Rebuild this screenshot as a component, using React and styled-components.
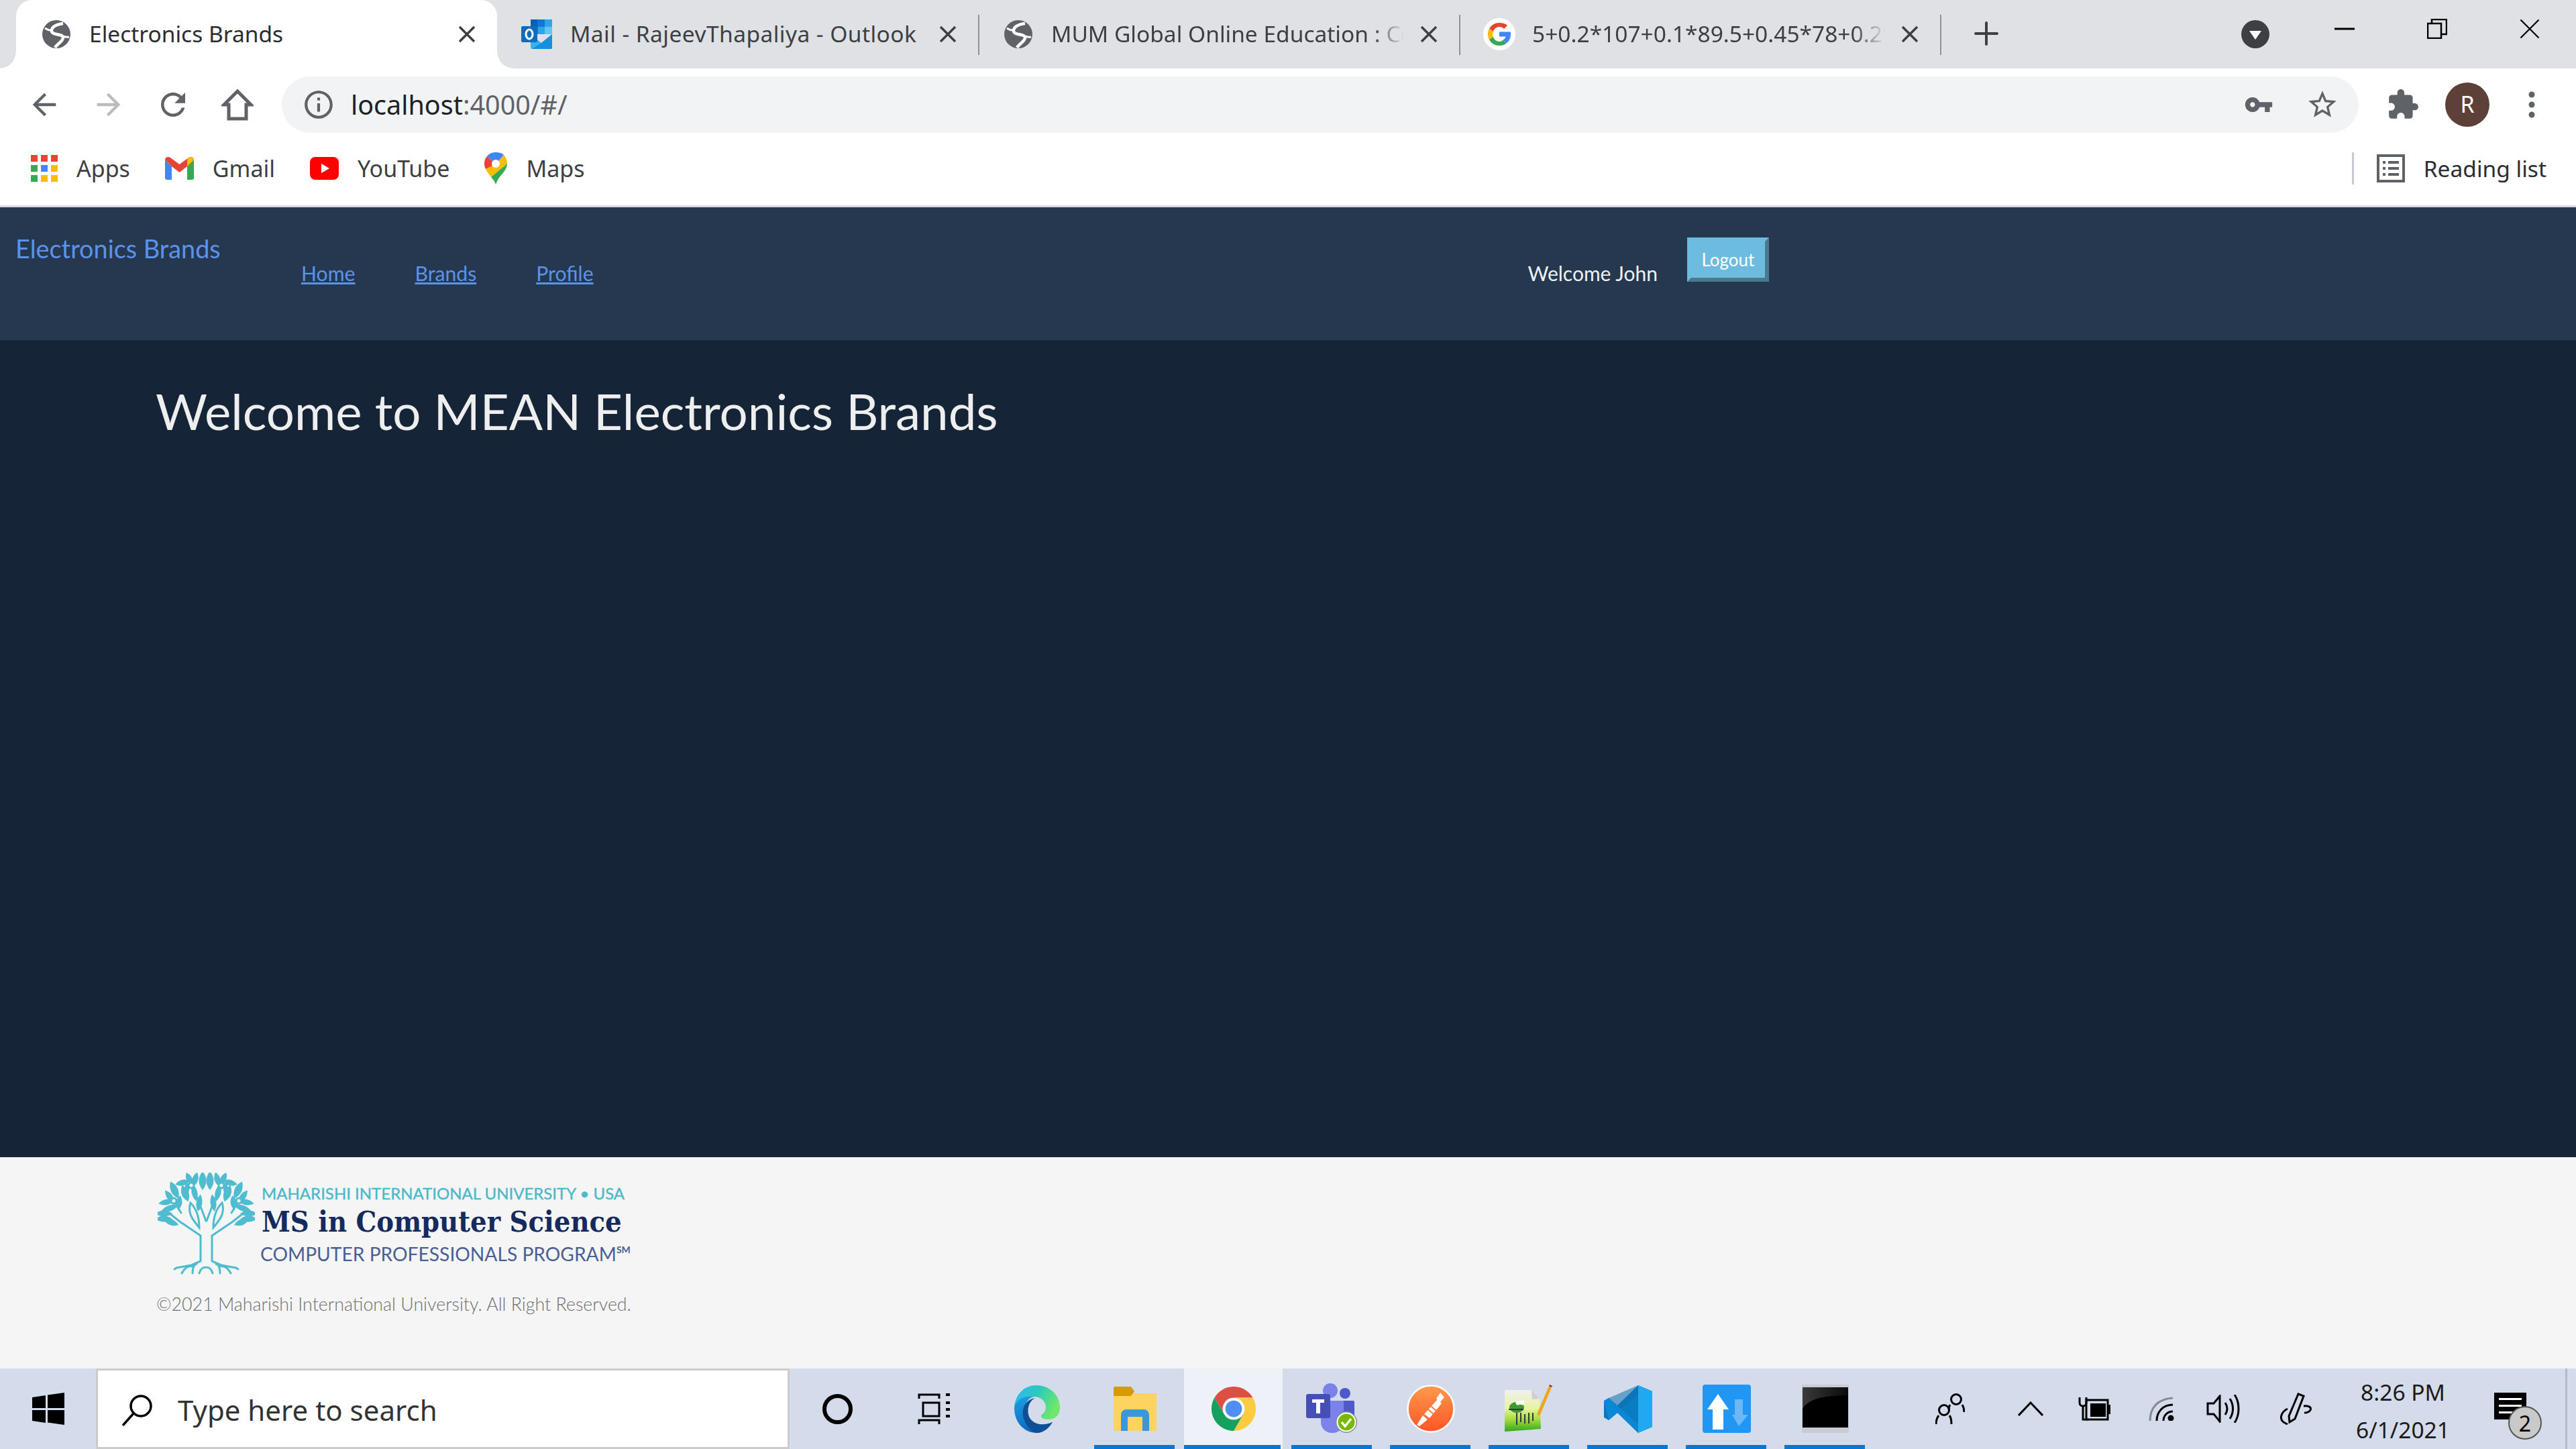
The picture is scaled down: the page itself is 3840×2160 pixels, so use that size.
import React from "react";
import styled, { createGlobalStyle } from "styled-components";

const GlobalStyle = createGlobalStyle`
  html, body { margin: 0; padding: 0; background: #152537; }
  * { box-sizing: border-box; }
`;

const Screen = styled.div`
  width: 3840px;
  height: 2160px;
  display: flex;
  flex-direction: column;
  overflow: hidden;
  font-family: "Lato", "Liberation Sans", sans-serif;
`;

/* ---------- browser chrome ---------- */
const BrowserFrame = styled.header`
  flex: none;
  background: #fff;
  border-bottom: 3px solid #dadce0;
  font-family: "Noto Sans", "Open Sans", sans-serif;
`;

const TabStrip = styled.div`
  height: 102px;
  background: #dfe1e5;
  display: flex;
  padding-left: 24px;
`;

const Tab = styled.div`
  position: relative;
  width: 717px;
  height: 102px;
  display: flex;
  align-items: center;
  padding-left: 38px;
  background: ${(p) => (p.$active ? "#fff" : "transparent")};
  border-radius: 24px 24px 0 0;
  color: ${(p) => (p.$active ? "#2b2d30" : "#3c4043")};

  ${(p) =>
    p.$active &&
    `
    &::before, &::after {
      content: "";
      position: absolute;
      bottom: 0;
      width: 24px;
      height: 24px;
    }
    &::before { left: -24px; background: radial-gradient(circle at 0 0, #dfe1e5 23px, #fff 24px); }
    &::after { right: -24px; background: radial-gradient(circle at 100% 0, #dfe1e5 23px, #fff 24px); }
  `}

  ${(p) =>
    p.$divider &&
    `
    &::after {
      content: "";
      position: absolute;
      right: -2px;
      top: 22px;
      width: 2px;
      height: 60px;
      background: #8f9296;
    }
  `}
`;

const Favicon = styled.span`
  flex: none;
  width: 44px;
  margin-right: 27px;
  display: flex;
  justify-content: center;
`;

const TabTitle = styled.span`
  flex: none;
  width: 526px;
  margin-bottom: 3px;
  font-size: 33.500px;
  letter-spacing: ${(p) => p.$spacing || 0}px;
  line-height: 48px;
  white-space: nowrap;
  overflow: hidden;
  ${(p) =>
    p.$fade &&
    `
    mask-image: linear-gradient(to right, #000 91%, transparent 100%);
  `}
`;

const TabClose = styled.span`
  flex: none;
  margin-left: 24px;
  width: 26px;
  height: 26px;
  display: flex;
`;

const NewTab = styled.span`
  flex: none;
  margin: 32px 0 0 51px;
  width: 36px;
  height: 36px;
  display: flex;
`;

const TabSearch = styled.span`
  flex: none;
  margin: 30px 43px 0 auto;
  width: 42px;
  height: 42px;
  display: flex;
`;

const WindowButton = styled.span`
  flex: none;
  width: 138px;
  height: 86px;
  display: flex;
  align-items: center;
  justify-content: center;
`;

const Toolbar = styled.div`
  height: 108px;
  display: flex;
  align-items: center;
  padding-left: 18px;
`;

const ToolButton = styled.span`
  flex: none;
  width: 96px;
  display: flex;
  justify-content: center;
  align-items: center;
`;

const Omnibox = styled.div`
  flex: none;
  width: 3096px;
  height: 84px;
  margin: 12px 18px 0;
  align-self: flex-start;
  border-radius: 42px;
  background: #f1f3f4;
  display: flex;
  align-items: center;
  padding: 0 29px 0 30px;
`;

const UrlText = styled.span`
  margin-left: 23px;
  font-size: 39.500px;
  line-height: 48px;
  color: #202124;
  white-space: nowrap;
`;

const UrlRest = styled.span`
  color: #5f6368;
`;

const OmniActions = styled.span`
  margin-left: auto;
  display: flex;
  align-items: center;
  gap: 48px;
`;

const BookmarksBar = styled.div`
  height: 96px;
  padding: 0 44px 15px 46px;
  display: flex;
  align-items: center;
`;

const Bookmark = styled.span`
  display: flex;
  align-items: center;
  gap: 28px;
  margin-right: 52px;
  font-size: 34px;
  line-height: 44px;
  color: #3c4043;
`;

const ReadingList = styled.span`
  margin-left: auto;
  display: flex;
  align-items: center;
  gap: 28px;
  height: 48px;
  padding-left: 34px;
  border-left: 3px solid #c9cbce;
  font-size: 33.500px;
  line-height: 44px;
  color: #2b2d30;
`;

/* ---------- page ---------- */
const NavBar = styled.nav`
  flex: none;
  height: 198px;
  background: #253850;
  display: flex;
  align-items: flex-start;
  padding-left: 23px;
`;

const Brand = styled.a`
  flex: none;
  width: 426px;
  margin-top: 40px;
  font-size: 37.800px;
  line-height: 44px;
  color: #5b93e8;
`;

const NavLinks = styled.div`
  flex: none;
  display: flex;
  gap: 89px;
  margin-top: 83px;
`;

const NavLink = styled.a`
  font-size: 30.200px;
  line-height: 30px;
  color: #5b93e8;
  text-decoration: underline;
`;

const Greeting = styled.span`
  flex: none;
  margin: 83px 0 0 1393px;
  font-size: 30px;
  line-height: 30px;
  color: #eef1f4;
`;

const LogoutButton = styled.button`
  flex: none;
  width: 122px;
  height: 66px;
  margin: 45px 0 0 44px;
  padding: 0;
  border: 6px solid;
  border-color: #6ebbe0 #4a788f #4a788f #6ebbe0;
  background: #6ebbe0;
  color: #fff;
  font-family: inherit;
  font-size: 26px;
  line-height: 30px;
`;

const Main = styled.main`
  flex: 1;
  background: #152537;
  padding: 60px 0 0 232px;
`;

const Heading = styled.h1`
  margin: 0;
  font-size: 74.500px;
  line-height: 90px;
  font-weight: 400;
  color: #eeeeee;
`;

const Footer = styled.footer`
  flex: none;
  height: 315px;
  background: #f5f5f5;
  padding: 23px 0 0 235px;
`;

const Logo = styled.div`
  display: flex;
  align-items: flex-start;
`;

const LogoText = styled.div`
  margin: 17px 0 0 10px;
  display: flex;
  flex-direction: column;
`;

const LogoTop = styled.span`
  font-size: 24px;
  line-height: 28px;
  color: #4cb9ca;
  -webkit-text-stroke: 0.4px #4cb9ca;
  white-space: nowrap;
`;

const LogoTitle = styled.span`
  margin-top: 2px;
  font-family: "DejaVu Serif", "Liberation Serif", serif;
  font-stretch: condensed;
  font-size: 43px;
  line-height: 52px;
  font-weight: 700;
  color: #152a5e;
  white-space: nowrap;
`;

const LogoSub = styled.span`
  margin-top: 6px;
  margin-left: -2px;
  font-size: 28.200px;
  line-height: 32px;
  color: #4a5f95;
  white-space: nowrap;

  sup {
    font-size: 14px;
    font-weight: 700;
    line-height: 0;
    vertical-align: 12px;
  }
`;

const Copyright = styled.div`
  margin: 27px 0 0 -2px;
  font-size: 26.800px;
  line-height: 34px;
  font-weight: 300;
  color: #6f6f6f;
  white-space: nowrap;
`;

/* ---------- windows taskbar ---------- */
const Taskbar = styled.div`
  flex: none;
  height: 120px;
  background: #d4dbea;
  display: flex;
  align-items: stretch;
`;

const StartButton = styled.span`
  flex: none;
  width: 143px;
  display: flex;
  align-items: center;
  padding-left: 48px;
`;

const SearchBox = styled.div`
  flex: none;
  width: 1034px;
  border: 3px solid #cccccc;
  background: #fff;
  display: flex;
  align-items: center;
  padding-left: 35px;
  gap: 37px;
  font-family: "Noto Sans", "Open Sans", sans-serif;
  font-size: 42px;
  line-height: 56px;
  padding-top: 4px;
  color: #333;
`;

const TaskItem = styled.span`
  position: relative;
  flex: none;
  width: 147px;
  display: flex;
  align-items: center;
  justify-content: center;
  background: ${(p) => (p.$current ? "#eef1f8" : "transparent")};

  ${(p) =>
    p.$running &&
    `
    &::after {
      content: "";
      position: absolute;
      bottom: 0;
      left: ${p.$current ? "0" : "13px"};
      right: ${p.$current ? "3px" : "14px"};
      height: 6px;
      background: #0078d7;
    }
  `}
`;

const Tray = styled.div`
  margin-left: auto;
  display: flex;
  align-items: stretch;
`;

const TraySlot = styled.span`
  flex: none;
  width: ${(p) => p.$w}px;
  display: flex;
  align-items: center;
  justify-content: center;
`;

const Clock = styled.div`
  flex: none;
  width: 158px;
  display: flex;
  flex-direction: column;
  align-items: center;
  padding-top: 13px;
  gap: 12px;
  font-family: "Noto Sans", "Open Sans", sans-serif;
  font-size: 33.500px;
  line-height: 44px;
  color: #1a1a1a;
  white-space: nowrap;
`;

const Notifications = styled.span`
  position: relative;
  flex: none;
  width: 162px;
  display: flex;
  align-items: flex-start;
  justify-content: center;
  padding-top: 36px;
`;

const NotifyBadge = styled.span`
  position: absolute;
  left: 78px;
  top: 56px;
  width: 50px;
  height: 50px;
  border-radius: 50%;
  border: 2px solid #555;
  background: #c9c9c9;
  color: #000;
  display: flex;
  align-items: center;
  justify-content: center;
  font-family: "Noto Sans", sans-serif;
  font-size: 32px;
`;

const ShowDesktop = styled.span`
  flex: none;
  width: 16px;
  margin-left: 1px;
  border-left: 3px solid #b4bac8;
`;

const Svg = styled.svg`
  display: block;
  flex: none;
  width: ${(p) => p.$w}px;
  height: ${(p) => p.$h || p.$w}px;
  margin-right: ${(p) => p.$mr || 0}px;
`;

/* ---------- icons ---------- */
const Mat = ({ d, size, color = "#5f6368", h }) => (
  <Svg $w={size} $h={h} viewBox="0 0 24 24" fill={color}>
    <path d={d} />
  </Svg>
);

const BACK = "M20 11H7.83l5.59-5.59L12 4l-8 8 8 8 1.41-1.41L7.83 13H20v-2z";
const FORWARD = "M12 4l-1.41 1.41L16.17 11H4v2h12.17l-5.58 5.59L12 20l8-8z";
const RELOAD =
  "M17.65 6.35C16.2 4.9 14.21 4 12 4c-4.42 0-7.99 3.58-7.99 8s3.57 8 7.99 8c3.73 0 6.84-2.55 7.73-6h-2.08c-.82 2.33-3.04 4-5.65 4-3.31 0-6-2.69-6-6s2.69-6 6-6c1.66 0 3.14.69 4.22 1.78L13 11h7V4l-2.35 2.35z";
const INFO =
  "M11 7h2v2h-2zm0 4h2v6h-2zm1-9C6.48 2 2 6.48 2 12s4.48 10 10 10 10-4.48 10-10S17.52 2 12 2zm0 18c-4.41 0-8-3.59-8-8s3.59-8 8-8 8 3.59 8 8-3.59 8-8 8z";
const KEY =
  "M12.65 10C11.83 7.67 9.61 6 7 6c-3.31 0-6 2.69-6 6s2.69 6 6 6c2.61 0 4.83-1.67 5.65-4H17v4h4v-4h2v-4H12.65zM7 14c-1.1 0-2-.9-2-2s.9-2 2-2 2 .9 2 2-.9 2-2 2z";
const STAR =
  "M22 9.24l-7.19-.62L12 2 9.19 8.63 2 9.24l5.46 4.73L5.82 21 12 17.27 18.18 21l-1.63-7.03L22 9.24zM12 15.4l-3.76 2.27 1-4.28-3.32-2.88 4.38-.38L12 6.1l1.71 4.04 4.38.38-3.32 2.88 1 4.28L12 15.4z";
const PUZZLE =
  "M20.5 11H19V7c0-1.1-.9-2-2-2h-4V3.5C13 2.12 11.88 1 10.5 1S8 2.12 8 3.5V5H4c-1.1 0-1.99.9-1.99 2v3.8H3.5c1.49 0 2.7 1.21 2.7 2.7s-1.21 2.7-2.7 2.7H2V20c0 1.1.9 2 2 2h3.8v-1.5c0-1.49 1.21-2.7 2.7-2.7 1.49 0 2.7 1.21 2.7 2.7V22H17c1.1 0 2-.9 2-2v-4h1.5c1.38 0 2.5-1.12 2.5-2.5S21.88 11 20.5 11z";

const GlobeIcon = () => (
  <Svg $w={42} viewBox="0 0 42 42">
    <circle cx="21" cy="21" r="21" fill="#5f6368" />
    <path
      d="M31 5c-7 1-16 4-17 10-1 5 6 6 12 7 5 1 6 4 4 7-2 4-8 7-11 12"
      fill="none"
      stroke="#fff"
      strokeWidth="4.500"
    />
    <path d="M4 12c3 2 6 3 8 3M40 25c-3 1-6 0-9-1" fill="none" stroke="#fff" strokeWidth="3" />
  </Svg>
);

const OutlookIcon = () => (
  <Svg $w={48} viewBox="0 0 48 48">
    <rect x="14" y="2" width="32" height="22" fill="#0a5fb4" />
    <rect x="24" y="2" width="11" height="11" fill="#0f78d4" />
    <rect x="35" y="2" width="11" height="11" fill="#2ca6e8" />
    <rect x="14" y="13" width="11" height="11" fill="#0f78d4" />
    <rect x="25" y="13" width="10" height="11" fill="#2ca6e8" />
    <rect x="35" y="13" width="11" height="11" fill="#62c3f5" />
    <path d="M14 24l16 13 16-13v20a2 2 0 0 1-2 2H16a2 2 0 0 1-2-2z" fill="#3cb0ec" />
    <path d="M30 37L46 24v20a2 2 0 0 1-2 2H16z" fill="#1490df" />
    <rect x="0" y="12" width="24" height="24" rx="2" fill="#0f6cbd" />
    <ellipse cx="12" cy="24" rx="5" ry="7" fill="none" stroke="#fff" strokeWidth="3" />
  </Svg>
);

const GoogleIcon = () => (
  <Svg $w={48} viewBox="0 0 48 48">
    <circle cx="24" cy="24" r="24" fill="#fff" />
    <path d="M24 13c3 0 5 1 7 3l5-5c-3-3-7-4-12-4-6 0-12 3-15 9l6 4c1-4 5-7 9-7z" fill="#ea4335" />
    <path d="M9 16c-3 5-3 11 0 16l6-4c-1-3-1-5 0-8z" fill="#fbbc05" />
    <path d="M24 41c4 0 8-1 11-4l-6-4c-1 1-3 2-5 2-4 0-8-3-9-7l-6 4c3 6 9 9 15 9z" fill="#34a853" />
    <path d="M41 24c0-1 0-2-.3-3.500H24v7h9.500c-.5 2-2 4-4.500 5.500l6 4c4-3 6-8 6-13z" fill="#4285f4" />
  </Svg>
);

const AppsIcon = () => (
  <Svg $w={40} viewBox="0 0 40 40">
    {[
      ["#ea4335", "#ea4335", "#ea4335"],
      ["#34a853", "#4285f4", "#fbbc04"],
      ["#34a853", "#fbbc04", "#fbbc04"],
    ].map((row, r) =>
      row.map((fill, c) => (
        <rect key={`${r}${c}`} x={c * 15} y={r * 15} width="10" height="10" fill={fill} />
      ))
    )}
  </Svg>
);

const GmailIcon = () => (
  <Svg $w={43} $h={34} viewBox="0 0 43 34">
    <path d="M0 4v27a3 3 0 0 0 3 3h7V14z" fill="#4285f4" />
    <path d="M43 4v27a3 3 0 0 1-3 3h-7V14z" fill="#34a853" />
    <path d="M0 4c0-4 5-5 8-3l13.500 10L35 1c3-2 8-1 8 3L33 14 21.500 23 10 14z" fill="#ea4335" />
    <path d="M35 1c3-2 8-1 8 3L33 14V3z" fill="#fbbc04" />
  </Svg>
);

const YoutubeIcon = () => (
  <Svg $w={43} $h={34} viewBox="0 0 43 34">
    <rect width="43" height="34" rx="8" fill="#f00" />
    <path d="M17 10l12 7-12 7z" fill="#fff" />
  </Svg>
);

const MapsIcon = () => (
  <Svg $w={34} $h={48} viewBox="0 0 34 48">
    <path d="M17 0C12 0 7 2 4 6l13 12L29 4c-3-3-7-4-12-4z" fill="#4285f4" />
    <path d="M4 6C1 9 0 13 0 17c0 3 1 6 2 8l15-7z" fill="#ea4335" />
    <path d="M29 4l-12 14-15 7c2 4 5 8 8 12l24-20c0-5-2-10-5-13z" fill="#fbbc04" />
    <path d="M34 17c0 6-4 11-8 16-4 4-7 9-9 15-1-4-4-8-7-11z" fill="#34a853" />
    <circle cx="17" cy="17" r="6" fill="#fff" />
  </Svg>
);

const ReadingIcon = () => (
  <Svg $w={42} viewBox="0 0 42 42" fill="#5f6368">
    <path d="M0 0h42v42H0zM4 4v34h34V4z" fillRule="evenodd" />
    <path d="M9 10h4v4H9zM17 10h16v4H17zM9 19h4v4H9zM17 19h16v4H17zM9 28h4v4H9zM17 28h16v4H17z" />
  </Svg>
);

const TREE_COLOR = "#4fbccf";

const LEAVES = [
  [67, 12, 0, 14, 5],
  [56, 10, 15, 11, 4],
  [47, 9, -25, 10, 4],
  [37, 15, 75, 11, 4],
  [25, 26, -25, 14, 5],
  [41, 31, -20, 13, 5],
  [18, 36, -35, 12, 4],
  [13, 44, 80, 12, 4],
  [18, 53, 70, 14, 4],
  [9, 61, 90, 13, 4],
  [9, 69, 90, 13, 4],
  [20, 74, 110, 12, 4],
  [32, 45, 8, 11, 4],
  [55, 30, -12, 13, 4],
  [62, 45, 8, 13, 4],
  [44, 22, -5, 10, 3],
];

const Leaf = ({ x, y, r, l, w }) => (
  <path
    transform={`translate(${x} ${y}) rotate(${r})`}
    d={`M0 ${-l}Q${w * 2.2} 0 0 ${l}Q${-w * 2.2} 0 0 ${-l}Z`}
    fill={TREE_COLOR}
  />
);

const TreeLogo = () => (
  <Svg $w={145} $h={152} viewBox="0 0 145 152">
    {LEAVES.map(([x, y, r, l, w]) => (
      <React.Fragment key={`${x}-${y}`}>
        <Leaf x={x} y={y} r={r} l={l} w={w} />
        <Leaf x={145 - x} y={y} r={-r} l={l} w={w} />
      </React.Fragment>
    ))}
    <g fill="none" stroke={TREE_COLOR} strokeWidth="3" strokeLinecap="round">
      <path d="M64 94v38l-14 6-22 4-3 2M81 94v38l14 6 22 4 3 2" />
      <path d="M64 94L33 73 14 58M81 94l31-21 19-15" />
      <path d="M72 72L60 40 50 19M73 72l12-32 10-21" />
      <path d="M62 82C52 70 44 60 49 45c8 8 13 20 13 37zM83 82c10-12 18-22 13-37-8 8-13 20-13 37z" />
      <path d="M35 60L24 42M110 60l11-18" />
      <path d="M36 150c4-8 10-12 18-10M52 150c0-8 2-13 6-14M109 150c-4-8-10-12-18-10M93 150c0-8-2-13-6-14M62 150c2-7 5-9 10-9s8 2 10 9" />
      <circle cx="50" cy="19" r="4" fill="#f5f5f5" />
      <circle cx="95" cy="19" r="4" fill="#f5f5f5" />
      <circle cx="24" cy="42" r="4" fill="#f5f5f5" />
      <circle cx="121" cy="42" r="4" fill="#f5f5f5" />
    </g>
  </Svg>
);

const WindowsLogo = () => (
  <Svg $w={48} viewBox="0 0 48 48" fill="#000">
    <path d="M0 7l20-3v19H0zM23 3.500L48 0v23H23zM0 26h20v19L0 42zM23 26h25v22l-25-3.500z" />
  </Svg>
);

const SearchGlass = () => (
  <Svg $w={47} $h={48} viewBox="0 0 47 48" fill="none" stroke="#000" strokeWidth="3.500">
    <circle cx="29" cy="18" r="15" />
    <path d="M18 29L2 47" />
  </Svg>
);

const CortanaRing = () => (
  <Svg $w={47} $mr={5} viewBox="0 0 47 47" fill="none" stroke="#000" strokeWidth="6">
    <circle cx="23.500" cy="23.500" r="19.500" />
  </Svg>
);

const TaskViewIcon = () => (
  <Svg $w={50} $h={46} $mr={10} viewBox="0 0 50 46" fill="none" stroke="#000" strokeWidth="3">
    <path d="M2 8V2h30v6M8 14h24v20H8zM2 46v-6h30v6" />
    <path d="M42 2h6M42 14h6M42 24h6M42 34h6" strokeWidth="4" />
  </Svg>
);

const EdgeIcon = () => (
  <Svg $w={72} $h={73} viewBox="0 0 72 73">
    <defs>
      <linearGradient id="edgeTop" x1="0" y1="0" x2="1" y2="0.4">
        <stop offset="0" stopColor="#2fb8f4" />
        <stop offset="0.5" stopColor="#2cc8c0" />
        <stop offset="1" stopColor="#6ce86a" />
      </linearGradient>
      <linearGradient id="edgeMid" x1="0.2" y1="0" x2="0.6" y2="1">
        <stop offset="0" stopColor="#1b9de2" />
        <stop offset="1" stopColor="#0a63b8" />
      </linearGradient>
    </defs>
    <path
      d="M3 36C3 15 18 1 36 1c20 0 35 15 35 33 0 13-9 18-17 18-7 0-12-3-11-6 1-2 7-4 7-12 0-8-6-16-18-16C18 18 3 26 3 36z"
      fill="url(#edgeTop)"
    />
    <path d="M3 36c0-12 13-20 29-18-10 2-16 14-12 26 4 14 20 22 40 12-8 10-15 16-24 16C16 72 3 54 3 36z" fill="url(#edgeMid)" />
    <path d="M60 56c-20 8-34 0-36-12-2-10 2-20 10-24-12 2-20 12-18 26 2 14 14 26 20 26 10 0 18-6 24-16z" fill="#0f4f96" />
  </Svg>
);

const ExplorerIcon = () => (
  <Svg $w={64} $h={66} viewBox="0 0 64 66">
    <path d="M0 10h64v54a2 2 0 0 1-2 2H2a2 2 0 0 1-2-2z" fill="#ffd35f" />
    <path d="M0 2a2 2 0 0 1 2-2h24l5 7-5 7H0z" fill="#d99a00" />
    <path d="M11 66V42a8 8 0 0 1 8-8h26a8 8 0 0 1 8 8v24H43V45H21v21z" fill="#3a97dc" />
  </Svg>
);

const ChromeIcon = () => (
  <Svg $w={66} viewBox="0 0 48 48">
    <path d="M3.200 12A24 24 0 0 1 44.800 12H24A12 12 0 0 0 13.600 30Z" fill="#db4f45" />
    <path d="M44.800 12A24 24 0 0 1 24 48L34.400 30A12 12 0 0 0 24 12Z" fill="#fdcb40" />
    <path d="M24 48A24 24 0 0 1 3.200 12L13.600 30A12 12 0 0 0 34.400 30Z" fill="#14a05f" />
    <circle cx="24" cy="24" r="11" fill="#fff" />
    <circle cx="24" cy="24" r="9" fill="#4f8ff2" />
  </Svg>
);

const TeamsIcon = () => (
  <Svg $w={78} $h={76} viewBox="0 0 78 76">
    <circle cx="36" cy="11" r="11" fill="#7b83eb" />
    <circle cx="58" cy="15" r="8" fill="#5059c9" />
    <path d="M46 26h24a2 2 0 0 1 2 2v30H46z" fill="#5059c9" />
    <path d="M22 26h34v32a16 16 0 0 1-16 16h-2a16 16 0 0 1-16-16z" fill="#7b83eb" />
    <rect x="0" y="16" width="36" height="36" rx="3" fill="#4650b4" />
    <path d="M9 24h18v5h-6v16h-6V29H9z" fill="#fff" />
    <circle cx="60" cy="58" r="16" fill="#8a8f8f" />
    <circle cx="60" cy="58" r="13.500" fill="#76b900" stroke="#fff" strokeWidth="2" />
    <path d="M53 58l5 6 9-11" fill="none" stroke="#fff" strokeWidth="3.500" />
  </Svg>
);

const PostmanIcon = () => (
  <Svg $w={72} viewBox="0 0 72 72">
    <defs>
      <linearGradient id="postmanFill" x1="0" y1="0" x2="0" y2="1">
        <stop offset="0" stopColor="#ff9a4d" />
        <stop offset="1" stopColor="#ff5526" />
      </linearGradient>
    </defs>
    <circle cx="36" cy="36" r="34.500" fill="url(#postmanFill)" stroke="#fff" strokeWidth="2.500" />
    <path d="M50 12l6 7-6 7-6-5zM46 22l6 6-18 22-8-6zM24 46l7 6-12 10-4-2z" fill="#fff" />
    <path d="M36 32l8 7M32 37l8 7" stroke="#ff7a3a" strokeWidth="2" />
  </Svg>
);

const NotepadIcon = () => (
  <Svg $w={78} $h={72} viewBox="0 0 78 72">
    <defs>
      <linearGradient id="notepadFill" x1="0" y1="0" x2="0" y2="1">
        <stop offset="0" stopColor="#f0f0f0" />
        <stop offset="0.45" stopColor="#e6f4a0" />
        <stop offset="0.7" stopColor="#a7dc3e" />
        <stop offset="1" stopColor="#2fa81e" />
      </linearGradient>
    </defs>
    <path d="M2 8h40l12 13 2 45-54 4z" fill="url(#notepadFill)" />
    <path d="M42 8l1 14 11-1z" fill="#cfcfcf" />
    <ellipse cx="20" cy="34" rx="11" ry="8" fill="#3e9a2c" />
    <circle cx="22" cy="27" r="3.500" fill="#fff" />
    <circle cx="28" cy="27" r="3.500" fill="#fff" />
    <path d="M8 37h22M20 42v18M26 42v14M32 44v14M38 42v16M44 42v12" stroke="#33383a" strokeWidth="2" />
    <path d="M50 44L68 2l4 2-18 43z" fill="#eda71d" />
    <path d="M68 2l1-2 4 2-1 2z" fill="#8e2d2d" />
  </Svg>
);

const VscodeIcon = () => (
  <Svg $w={72} $h={73} viewBox="0 0 72 73">
    <path d="M51 1L20 31 7 20 0 24v25l7 4 13-11 31 30 21-9V10z" fill="#0a7cc1" />
    <path d="M7 20L0 26v21l7 6 45-40L51 1z" fill="#0d6fae" opacity="0.55" />
    <path d="M0 25l7-5 45 40-1 12-31-30L7 53z" fill="#0a88d6" />
    <path d="M51 1l21 9v53l-21 9z" fill="#21a9f0" />
  </Svg>
);

const SortIcon = () => (
  <Svg $w={72} $h={72} viewBox="0 0 72 72">
    <rect width="72" height="72" rx="4" fill="#2196f3" />
    <path d="M23 14l16 23h-8v30H15V37H7z" fill="#fff" />
    <path d="M46 26h12v23h8L52 66 42 49h4z" fill="#6cb8f6" transform="translate(2 -4)" />
  </Svg>
);

const CmdIcon = () => (
  <Svg $w={70} $h={72} viewBox="0 0 70 72">
    <defs>
      <linearGradient id="cmdFill" x1="0" y1="0" x2="1" y2="0">
        <stop offset="0" stopColor="#3a3a3a" />
        <stop offset="1" stopColor="#0a0a0a" />
      </linearGradient>
    </defs>
    <rect width="70" height="72" fill="#c8ccd2" />
    <rect x="1" y="4" width="68" height="60" fill="url(#cmdFill)" />
    <path d="M1 36c8-14 30-20 68-20v48H1z" fill="#000" />
  </Svg>
);

const PeopleIcon = () => (
  <Svg $w={44} $h={46} viewBox="0 0 44 46" fill="none" stroke="#000" strokeWidth="3">
    <circle cx="31" cy="9" r="7.500" />
    <path d="M22 17c-2 3-2 5-2 7M40 17c2 3 3 6 3 11" />
    <circle cx="13" cy="25" r="7.500" />
    <path d="M5 33C2 37 1 41 1 46M21 33c3 4 3 8 3 13" />
  </Svg>
);

const ChevronIcon = () => (
  <Svg $w={38} $h={22} viewBox="0 0 38 22" fill="none" stroke="#000" strokeWidth="3">
    <path d="M1 21L19 2l18 19" />
  </Svg>
);

const BatteryIcon = () => (
  <Svg $w={48} $h={36} viewBox="0 0 48 36">
    <path d="M2 1v8c0 3 2 5 5 5s5-2 5-5V1M7 14v20h8" fill="none" stroke="#000" strokeWidth="3" />
    <rect x="12" y="5" width="32" height="29" fill="none" stroke="#000" strokeWidth="3" />
    <rect x="18" y="10" width="23" height="20" fill="#000" />
    <rect x="44" y="12" width="4" height="14" fill="#000" />
  </Svg>
);

const WifiIcon = () => (
  <Svg $w={38} $h={36} viewBox="0 0 38 36" fill="none" strokeWidth="3">
    <path d="M2 36C2 16 14 3 36 2" stroke="#8a8a8a" />
    <path d="M12 36c0-14 10-24 24-24M22 36c0-8 6-14 14-14" stroke="#000" />
    <circle cx="33" cy="32" r="4.500" fill="#000" stroke="none" />
  </Svg>
);

const VolumeIcon = () => (
  <Svg $w={52} $h={42} viewBox="0 0 52 42" fill="none" stroke="#000" strokeWidth="3">
    <path d="M2 13h9L20 2v38l-9-11H2z" />
    <path d="M28 12c4 6 4 12 0 18M35 6c6 9 6 21 0 30M42 0c8 12 8 30 0 42" />
  </Svg>
);

const PenIcon = () => (
  <Svg $w={50} $h={48} viewBox="0 0 50 48" fill="none" stroke="#000" strokeWidth="3">
    <path d="M28 2l8 3-13 34-8 5-1-9z" />
    <path d="M36 20c8-1 12 2 10 6-2 3-6 4-9 4M12 24C4 28 0 36 4 42c2 3 6 4 8 5" />
  </Svg>
);

const NotifyIcon = () => (
  <Svg $w={48} $h={40} viewBox="0 0 48 40">
    <path d="M0 0h48v40H0z" />
    <path d="M7 8h34v3H7zM7 18h34v3H7zM7 28h34v3H7z" fill="#fff" />
  </Svg>
);

const Cross = ({ size, color = "#3c4043", width = 3.500 }) => (
  <Svg $w={size} viewBox="0 0 26 26" fill="none" stroke={color} strokeWidth={width}>
    <path d="M2 2l22 22M24 2L2 24" />
  </Svg>
);

const TABS = [
  { title: "Electronics Brands", icon: <GlobeIcon />, active: true },
  { title: "Mail - RajeevThapaliya - Outlook", icon: <OutlookIcon />, spacing: 0.45 },
  { title: "MUM Global Online Education : Course", icon: <GlobeIcon />, fade: true },
  { title: "5+0.2*107+0.1*89.5+0.45*78+0.2*90", icon: <GoogleIcon />, fade: true },
];

const TASK_APPS = [
  { icon: <CortanaRing /> },
  { icon: <TaskViewIcon /> },
  { icon: <EdgeIcon /> },
  { icon: <ExplorerIcon />, running: true },
  { icon: <ChromeIcon />, running: true, current: true },
  { icon: <TeamsIcon />, running: true },
  { icon: <PostmanIcon />, running: true },
  { icon: <NotepadIcon />, running: true },
  { icon: <VscodeIcon />, running: true },
  { icon: <SortIcon />, running: true },
  { icon: <CmdIcon />, running: true },
];

const App = () => (
  <Screen>
    <GlobalStyle />
    <BrowserFrame>
      <TabStrip>
        {TABS.map((tab) => (
          <Tab key={tab.title} $active={tab.active} $divider={!tab.active}>
            <Favicon>{tab.icon}</Favicon>
            <TabTitle $fade={tab.fade} $spacing={tab.spacing}>
              {tab.title}
            </TabTitle>
            <TabClose>
              <Cross size={26} />
            </TabClose>
          </Tab>
        ))}
        <NewTab>
          <Svg $w={36} viewBox="0 0 36 36" stroke="#3c4043" strokeWidth="4" strokeLinecap="round">
            <path d="M18 2v32M2 18h32" />
          </Svg>
        </NewTab>
        <TabSearch>
          <Svg $w={42} viewBox="0 0 42 42">
            <circle cx="21" cy="21" r="21" fill="#3c4043" />
            <path d="M12 16h18l-9 13z" fill="#fff" />
          </Svg>
        </TabSearch>
        <WindowButton>
          <Svg $w={30} $h={4} viewBox="0 0 30 4">
            <rect width="30" height="3" y="0.500" />
          </Svg>
        </WindowButton>
        <WindowButton>
          <Svg $w={30} viewBox="0 0 30 30" fill="none" stroke="#000" strokeWidth="2.500">
            <path d="M1 7h20v22H1zM7 6V1h22v22h-7" />
          </Svg>
        </WindowButton>
        <WindowButton>
          <Cross size={32} color="#000" width={1.800} />
        </WindowButton>
      </TabStrip>

      <Toolbar>
        <ToolButton>
          <Mat d={BACK} size={52} />
        </ToolButton>
        <ToolButton>
          <Mat d={FORWARD} size={52} color="#babcbe" />
        </ToolButton>
        <ToolButton>
          <Mat d={RELOAD} size={54} />
        </ToolButton>
        <ToolButton>
          <Svg $w={48} viewBox="0 0 48 48" fill="none" stroke="#5f6368" strokeWidth="5">
            <path d="M24 4L4 24h7v21h26V24h7z" />
          </Svg>
        </ToolButton>
        <Omnibox>
          <Mat d={INFO} size={50} />
          <UrlText>
            localhost<UrlRest>:4000/#/</UrlRest>
          </UrlText>
          <OmniActions>
            <Mat d={KEY} size={44} />
            <Mat d={STAR} size={50} color="#5f6368" />
          </OmniActions>
        </Omnibox>
        <ToolButton>
          <Mat d={PUZZLE} size={50} />
        </ToolButton>
        <ToolButton>
          <Svg $w={66} viewBox="0 0 66 66">
            <circle cx="33" cy="33" r="33" fill="#5d4037" />
            <text x="33" y="45" textAnchor="middle" fontFamily="Noto Sans, sans-serif" fontSize="34" fill="#fff">
              R
            </text>
          </Svg>
        </ToolButton>
        <ToolButton>
          <Svg $w={10} $h={40} viewBox="0 0 10 40" fill="#5f6368">
            <circle cx="5" cy="5" r="4.500" />
            <circle cx="5" cy="20" r="4.500" />
            <circle cx="5" cy="35" r="4.500" />
          </Svg>
        </ToolButton>
      </Toolbar>

      <BookmarksBar>
        <Bookmark>
          <AppsIcon />
          Apps
        </Bookmark>
        <Bookmark>
          <GmailIcon />
          Gmail
        </Bookmark>
        <Bookmark>
          <YoutubeIcon />
          YouTube
        </Bookmark>
        <Bookmark>
          <MapsIcon />
          Maps
        </Bookmark>
        <ReadingList>
          <ReadingIcon />
          Reading list
        </ReadingList>
      </BookmarksBar>
    </BrowserFrame>

    <NavBar>
      <Brand>Electronics Brands</Brand>
      <NavLinks>
        <NavLink>Home</NavLink>
        <NavLink>Brands</NavLink>
        <NavLink>Profile</NavLink>
      </NavLinks>
      <Greeting>Welcome John</Greeting>
      <LogoutButton>Logout</LogoutButton>
    </NavBar>

    <Main>
      <Heading>Welcome to MEAN Electronics Brands</Heading>
    </Main>

    <Footer>
      <Logo>
        <TreeLogo />
        <LogoText>
          <LogoTop>MAHARISHI INTERNATIONAL UNIVERSITY • USA</LogoTop>
          <LogoTitle>MS in Computer Science</LogoTitle>
          <LogoSub>
            COMPUTER PROFESSIONALS PROGRAM<sup>SM</sup>
          </LogoSub>
        </LogoText>
      </Logo>
      <Copyright>©2021 Maharishi International University. All Right Reserved.</Copyright>
    </Footer>

    <Taskbar>
      <StartButton>
        <WindowsLogo />
      </StartButton>
      <SearchBox>
        <SearchGlass />
        Type here to search
      </SearchBox>
      {TASK_APPS.map((app, i) => (
        <TaskItem key={i} $running={app.running} $current={app.current}>
          {app.icon}
        </TaskItem>
      ))}
      <Tray>
        <TraySlot $w={120}>
          <PeopleIcon />
        </TraySlot>
        <TraySlot $w={120}>
          <ChevronIcon />
        </TraySlot>
        <TraySlot $w={70}>
          <BatteryIcon />
        </TraySlot>
        <TraySlot $w={130}>
          <WifiIcon />
        </TraySlot>
        <TraySlot $w={56}>
          <VolumeIcon />
        </TraySlot>
        <TraySlot $w={160}>
          <PenIcon />
        </TraySlot>
        <Clock>
          <span>8:26 PM</span>
          <span>6/1/2021</span>
        </Clock>
        <Notifications>
          <NotifyIcon />
          <NotifyBadge>2</NotifyBadge>
        </Notifications>
        <ShowDesktop />
      </Tray>
    </Taskbar>
  </Screen>
);

export default App;
